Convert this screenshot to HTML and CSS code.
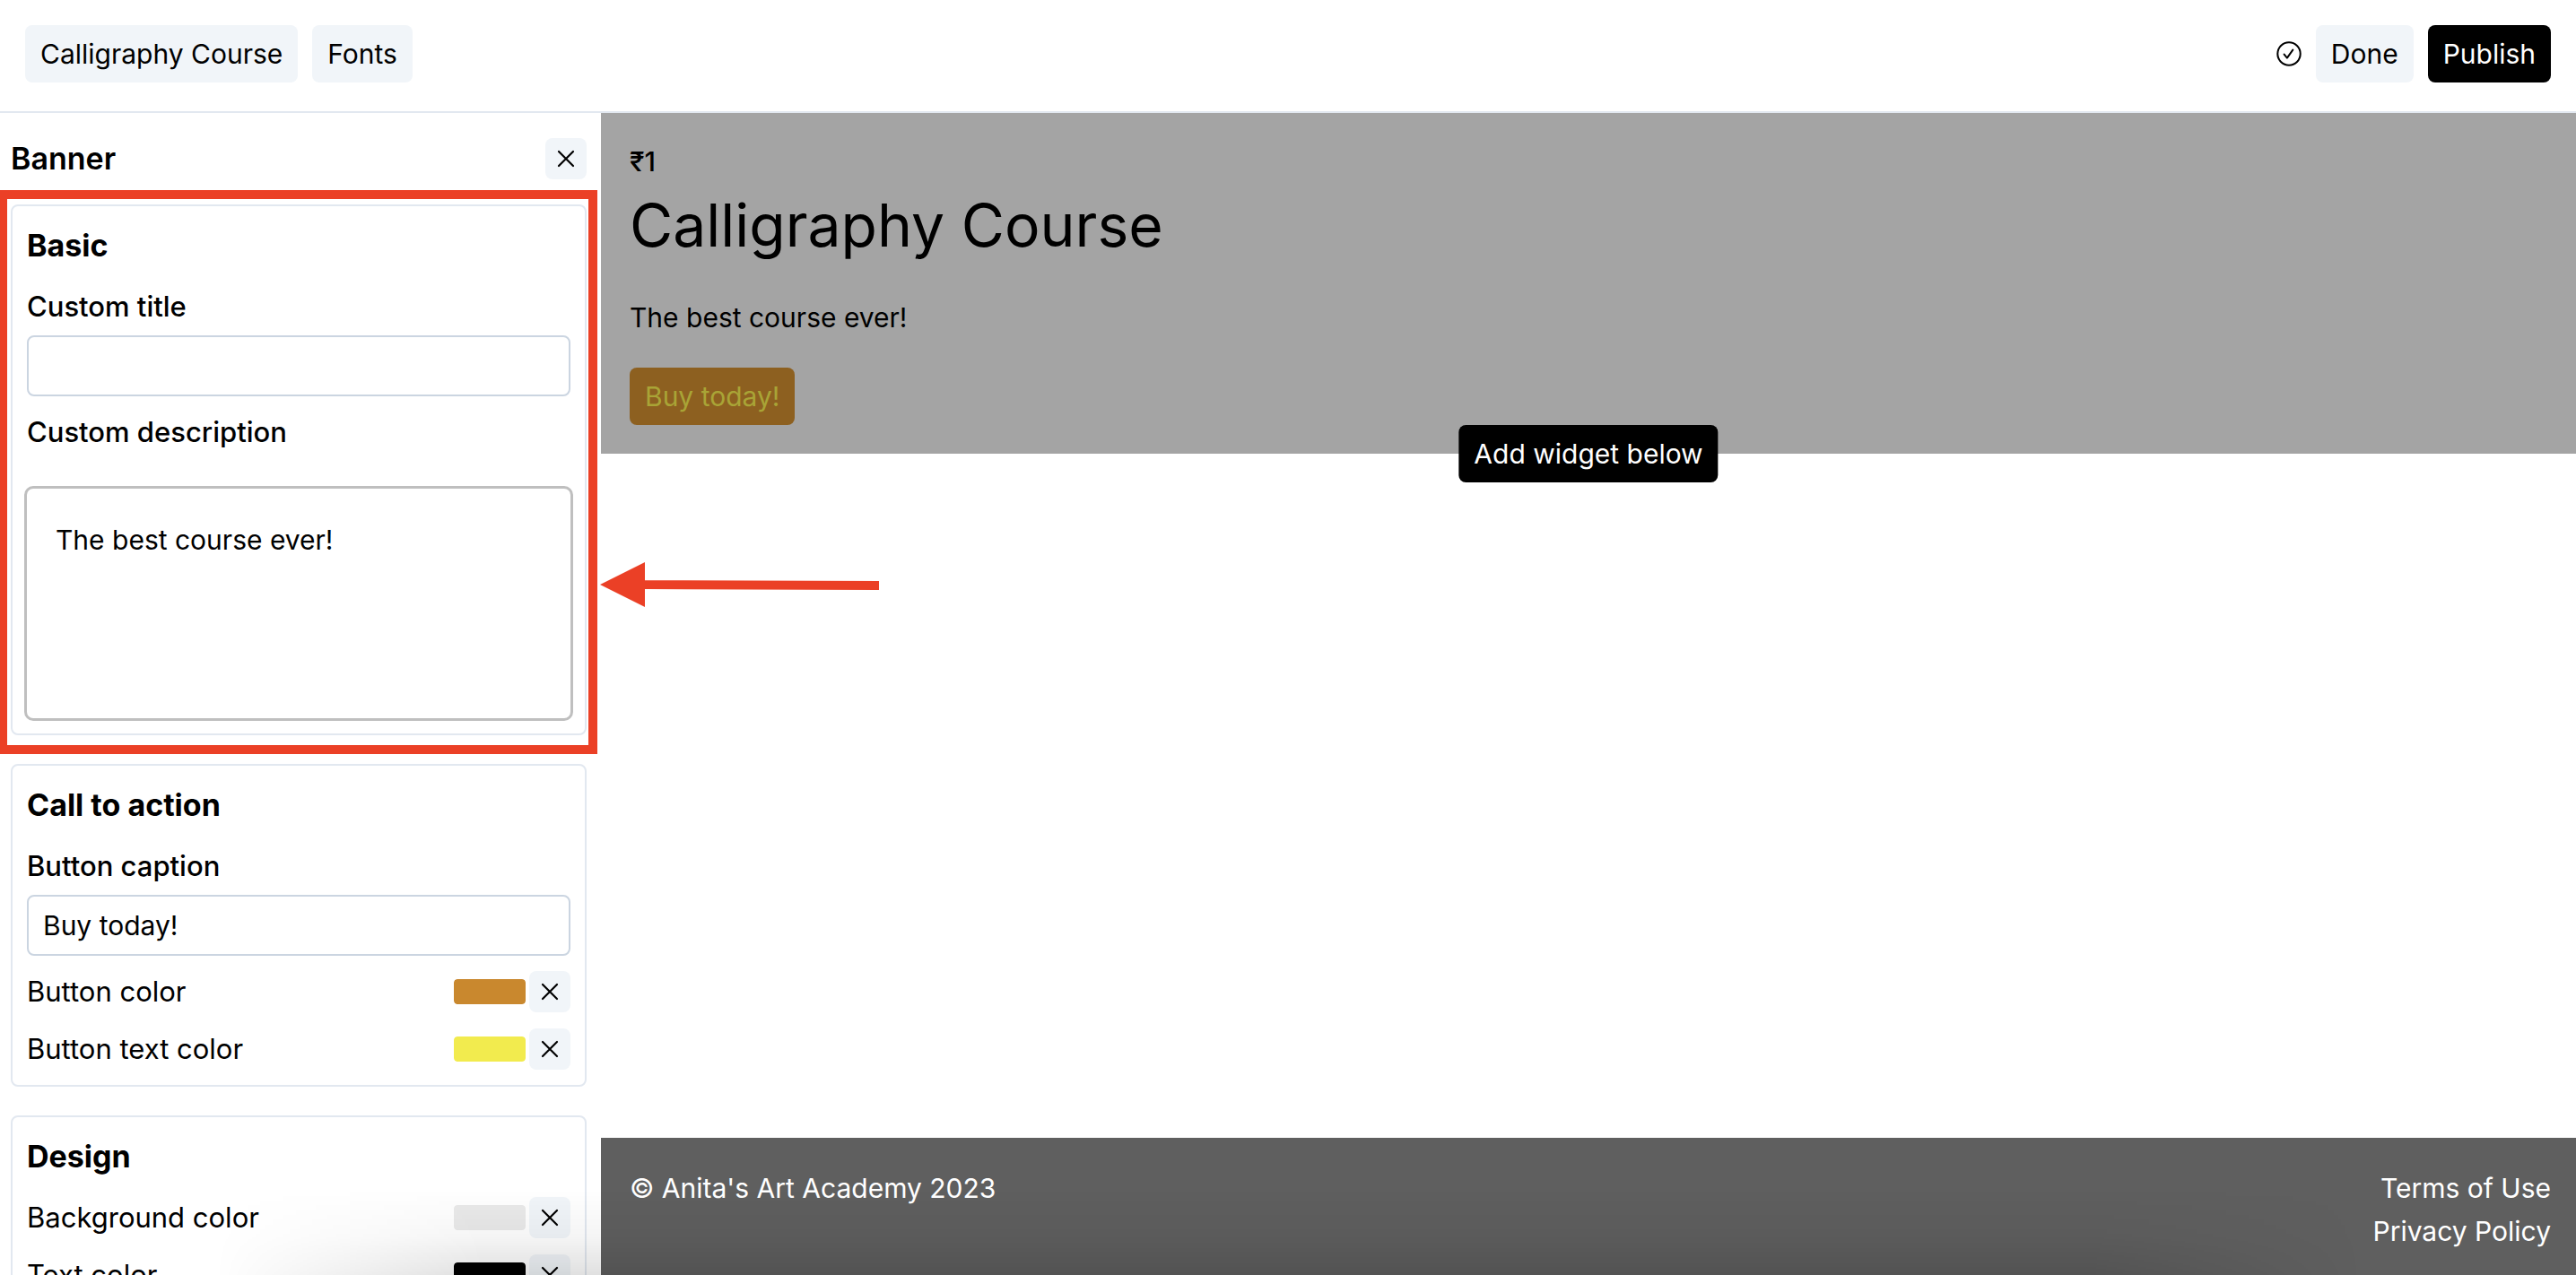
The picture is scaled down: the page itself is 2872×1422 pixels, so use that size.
FILE: index.html
```html
<!DOCTYPE html>
<html lang="en">
<head>
<meta charset="utf-8">
<title>Calligraphy Course - Page editor</title>
<link rel="stylesheet" href="styles.css">
</head>
<body>
<svg class="sprite" aria-hidden="true">
  <symbol id="cross" viewBox="0 0 15 15"><path d="M3.5 3.5l8 8M11.500 3.500l-8 8" fill="none" stroke="currentColor" stroke-width="1.1" stroke-linecap="round"/></symbol>
</svg>
<header class="topbar">
  <nav class="group">
    <button class="btn soft" type="button">Calligraphy Course</button>
    <button class="btn soft" type="button">Fonts</button>
  </nav>
  <div class="group">
    <svg class="saved" viewBox="0 0 28 28" role="img" aria-label="Saved"><circle cx="14" cy="14" r="12.7"/><path d="M8.6 14.6l3.3 4 6.4-9"/></svg>
    <button class="btn soft" type="button">Done</button>
    <button class="btn dark" type="button">Publish</button>
  </div>
</header>
<div class="workspace">
  <aside class="sidebar">
    <div class="panel-head">
      <h2>Banner</h2>
      <button class="close" type="button" aria-label="Close"><svg><use href="#cross"/></svg></button>
    </div>
    <section class="card">
      <h3>Basic</h3>
      <label class="caption" for="title">Custom title</label>
      <input class="field" id="title" type="text">
      <label class="caption" for="desc">Custom description</label>
      <textarea class="editor" id="desc">The best course ever!</textarea>
      <div class="highlight"></div>
      <svg class="arrow" viewBox="0 0 312 50" aria-hidden="true"><path d="M0 25L50 0V20.200L311 21V31L50 30V50Z"/></svg>
    </section>
    <section class="card">
      <h3>Call to action</h3>
      <label class="caption" for="cta">Button caption</label>
      <input class="field" id="cta" type="text" value="Buy today!">
      <div class="row">
        <label for="c1">Button color</label>
        <input class="swatch" id="c1" type="color" value="#c9882e">
        <button class="close" type="button" aria-label="Clear button color"><svg><use href="#cross"/></svg></button>
      </div>
      <div class="row">
        <label for="c2">Button text color</label>
        <input class="swatch" id="c2" type="color" value="#f2eb4e">
        <button class="close" type="button" aria-label="Clear button text color"><svg><use href="#cross"/></svg></button>
      </div>
    </section>
    <section class="card">
      <h3>Design</h3>
      <div class="row">
        <label for="c3">Background color</label>
        <input class="swatch" id="c3" type="color" value="#eaeaea">
        <button class="close" type="button" aria-label="Clear background color"><svg><use href="#cross"/></svg></button>
      </div>
      <div class="row">
        <label for="c4">Text color</label>
        <input class="swatch" id="c4" type="color" value="#000000">
        <button class="close" type="button" aria-label="Clear text color"><svg><use href="#cross"/></svg></button>
      </div>
    </section>
  </aside>
  <main class="canvas">
    <section class="banner">
      <p class="price">₹1</p>
      <h1>Calligraphy Course</h1>
      <p class="tagline">The best course ever!</p>
      <button class="btn buy" type="button">Buy today!</button>
      <button class="btn dark add" type="button">Add widget below</button>
    </section>
    <footer class="footer">
      <p>© Anita's Art Academy 2023</p>
      <nav><a href="#terms">Terms of Use</a><a href="#privacy">Privacy Policy</a></nav>
    </footer>
  </main>
</div>
<div class="shade"></div>
</body>
</html>
```
FILE: styles.css
```css
* { box-sizing: border-box; margin: 0; }
body {
  height: 100vh;
  display: flex;
  flex-direction: column;
  overflow: hidden;
  background: #fff;
  color: #000;
  font: 30px/48px Inter, "Liberation Sans", sans-serif;
}
button, input, textarea { font: inherit; color: inherit; }
.sprite { position: absolute; width: 0; height: 0; }

.topbar {
  display: flex;
  justify-content: space-between;
  padding: 28px 28px 32px;
  border-bottom: 2px solid #e2e8f0;
}
.group { display: flex; align-items: center; gap: 16px; }
.btn { height: 64px; padding: 0 17px; border: 0; border-radius: 8px; white-space: nowrap; }
.soft { background: #f1f5f9; }
.dark { background: #000; color: #fff; }
.saved { width: 28px; height: 28px; fill: none; stroke: #000; stroke-width: 2; stroke-linecap: round; stroke-linejoin: round; }

.workspace { flex: 1; min-height: 0; display: flex; }
.sidebar { position: relative; z-index: 1; flex: none; width: 670px; padding: 0 16px 0 12px; }
.panel-head { height: 102px; display: flex; align-items: center; justify-content: space-between; }
h2 { font-size: 34px; font-weight: 600; line-height: 48px; }
h3 { font-size: 34px; font-weight: 700; line-height: 56px; }
.close {
  width: 46px; height: 46px; padding: 0;
  display: grid; place-items: center;
  border: 0; border-radius: 8px; background: #f1f5f9;
}
.close svg { width: 30px; height: 30px; }
.card {
  position: relative;
  display: flex; flex-direction: column;
  margin-bottom: 32px; padding: 16px;
  border: 2px solid #e2e8f0; border-radius: 8px;
}
label { font-size: 31px; }
.caption { margin-top: 16px; font-weight: 500; }
.field { margin-top: 8px; height: 68px; width: 100%; padding: 0 16px; border: 2px solid #cbd5e1; border-radius: 8px; background: #fff; }
.editor {
  height: 262px; margin: 36px -3px -2px; padding: 33px 32px;
  border: 3px solid #bfbfbf; border-radius: 10px;
  background: #fff; resize: none;
}
.row { display: flex; align-items: center; gap: 4px; margin-top: 16px; }
.row label { flex: 1; }
.swatch { width: 80px; height: 28px; padding: 0; border: 0; border-radius: 4px; overflow: hidden; background: none; appearance: none; }
.swatch::-webkit-color-swatch-wrapper { padding: 0; }
.swatch::-webkit-color-swatch { border: 0; border-radius: 4px; }

.highlight { position: absolute; inset: -18px -14px -23px -16px; border: 10px solid #eb4026; pointer-events: none; }
.arrow { position: absolute; left: 655px; top: 397px; width: 312px; height: 50px; fill: #eb4026; }

.canvas { flex: 1; min-width: 0; display: flex; flex-direction: column; justify-content: space-between; }
.banner { position: relative; padding: 32px; background: #a4a4a4; }
.price { line-height: 44px; font-weight: 500; }
h1 { font-size: 66px; font-weight: 400; line-height: 98px; }
.tagline { margin: 30px 0 32px; }
.buy { display: block; background: #8d6020; color: #a9a436; }
.add { position: absolute; left: 50%; bottom: 0; transform: translate(-50%, 50%); }
.footer { display: flex; justify-content: space-between; padding: 32px 28px 25px 32px; background: #5f5f5f; color: #fff; }
.footer nav { display: flex; flex-direction: column; text-align: right; }
.footer a { color: inherit; text-decoration: none; }
.shade {
  position: absolute; z-index: 2; left: 240px; right: 240px; bottom: 0; height: 96px;
  pointer-events: none;
  background: linear-gradient(to top, rgba(0,0,0,.12), rgba(0,0,0,.04) 45%, transparent);
  mask-image: linear-gradient(to right, transparent, #000 300px, #000 calc(100% - 300px), transparent);
}
```
